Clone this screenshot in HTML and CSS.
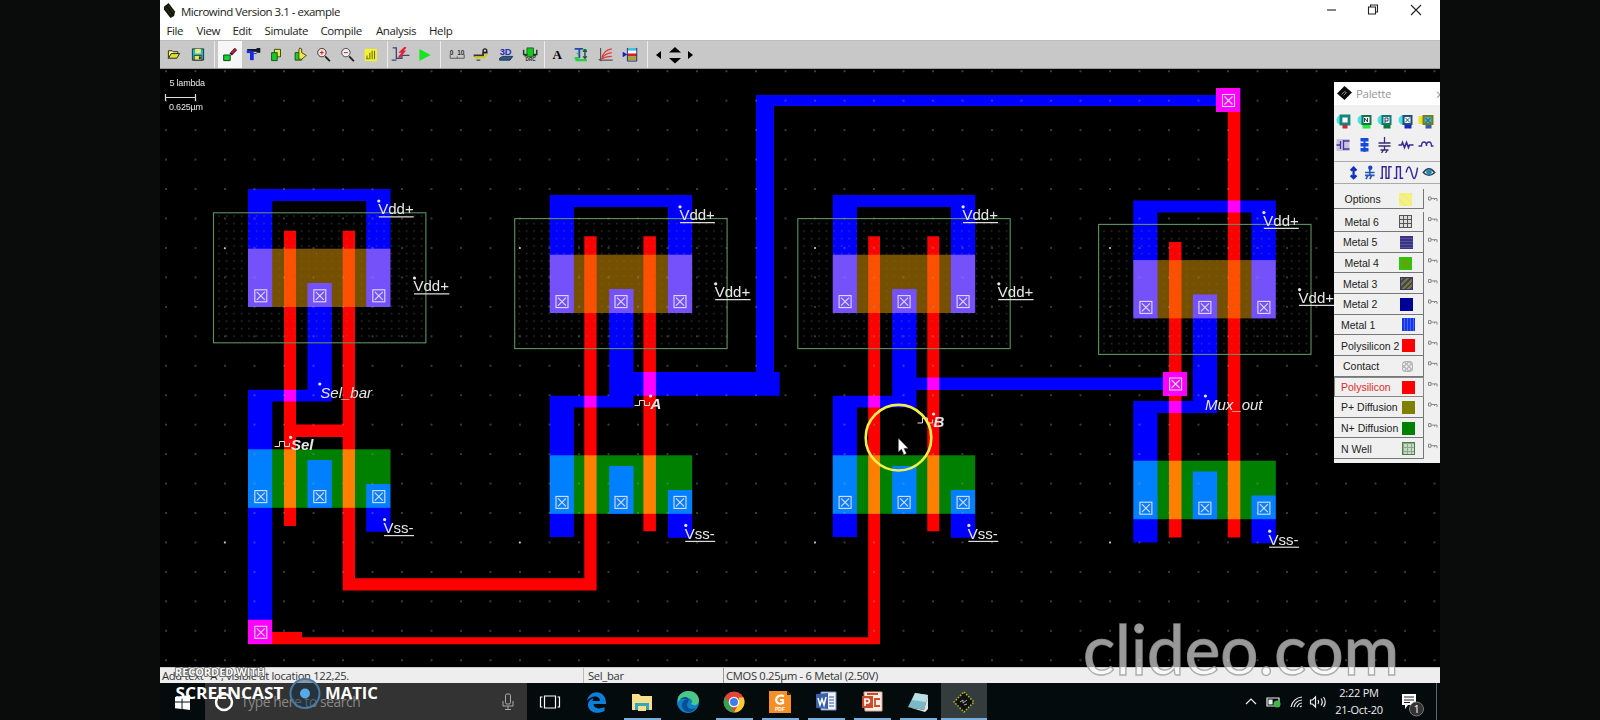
FILE: index.html
```html
<!DOCTYPE html>
<html lang="en">
<head>
<meta charset="utf-8">
<title>Microwind Version 3.1 - example</title>
<link rel="stylesheet" href="styles.css">
</head>
<body>
<div class="desktop">
  <header class="titlebar">
    <svg class="app-icon" viewBox="0 0 14 16"><path d="M1 4L6 0l7 9-1 5-4 2-7-9z" fill="#15180c"/><path d="M3 5l6 8M6 3l6 8" stroke="#55601f" stroke-dasharray="1 1.5"/></svg>
    <span class="title">Microwind Version 3.1 - example</span>
    <svg class="winctl" viewBox="0 0 110 20" fill="none" stroke="#222" stroke-width="1.1"><path d="M7 10h9"/><path d="M48.500 7h7v7h-7zM50.500 7V5h7v7h-2"/><path d="M91 5l10 10M101 5l-10 10"/></svg>
  </header>
  <nav class="menubar">
    <span class="m-file">File</span><span class="m-view">View</span><span class="m-edit">Edit</span><span class="m-sim">Simulate</span><span class="m-comp">Compile</span><span class="m-ana">Analysis</span><span class="m-help">Help</span>
  </nav>
  <div class="toolbar">
    <div class="tools files">
      <svg viewBox="0 0 16 16"><path d="M2 12V4h4l1 1h5v2H6z" fill="#ffff62" stroke="#222"/><path d="M2 12l3-5h9l-3 5z" fill="#dede35" stroke="#222"/></svg>
      <svg viewBox="0 0 16 16"><path d="M2 2h12v12H2z" fill="#22b8c4" stroke="#15323a"/><path d="M5 2h6v5H5z" fill="#f4ea72"/><path d="M4 9h8v5H4z" fill="#e6e65a" stroke="#222" stroke-width=".8"/><path d="M9 10h2v3H9z" fill="#225"/></svg>
    </div>
    <div class="tools edit">
      <svg class="pressed" viewBox="0 0 16 16"><path d="M1.500 8.500h7v6h-7z" fill="#10d42c" stroke="#113b15"/><path d="M9 8l5.500-6" stroke="#34141b" stroke-width="3.500"/><path d="M10 6.500l4-4.500" stroke="#c8213b" stroke-width="2"/></svg>
      <svg viewBox="0 0 16 16"><path d="M1 2h11v3H1zM11 1h4v5h-4z" fill="#11182a"/><path d="M4 5h4v9H4z" fill="#1728e6"/><path d="M1 4h4v2H1zM8 7h3" fill="#1728e6" stroke="#1728e6"/></svg>
      <svg viewBox="0 0 16 16"><path d="M5.500 2.500h6.500v8H5.500z" fill="#eee84b" stroke="#274c12"/><path d="M2.500 6h6v8.500h-6z" fill="#18c92a" stroke="#174e1a"/></svg>
      <svg viewBox="0 0 16 16"><path d="M2 6h7v8H2z" fill="#20cb2a" stroke="#154d17"/><path d="M7 1l2 1v4l5 3-5 4H6V3z" fill="#eee84b" stroke="#454514"/></svg>
      <svg viewBox="0 0 16 16"><circle cx="6" cy="6" r="4.500" fill="#f5ddd8" stroke="#333"/><path d="M4 6h4M6 4v4" stroke="#d01818"/><path d="M9.500 10l5 5" stroke="#222" stroke-width="2"/></svg>
      <svg viewBox="0 0 16 16"><circle cx="6" cy="6" r="4.500" fill="#eee" stroke="#444"/><path d="M4 6h4" stroke="#b51e1e"/><path d="M9.500 10l5 5" stroke="#222" stroke-width="2"/></svg>
      <svg viewBox="0 0 16 16"><path d="M1.500 2h13v13h-13z" fill="#f4f42b"/><path d="M4 9v4M7 6v7M9.500 4v9M12 4v9M3 12.500h3" stroke="#717123" stroke-width="1.200"/></svg>
    </div>
    <div class="tools run">
      <svg viewBox="0 0 20 16"><path d="M1 1h4v12M0 14h5M5 12h6V9h8" fill="none" stroke="#3b4774" stroke-width="1.400"/><path d="M15 0l-5 5h3l-5 6" fill="none" stroke="#e42233" stroke-width="2.300"/></svg>
      <svg viewBox="0 0 16 16"><path d="M2 2l12 6.500L2 15z" fill="#16e522"/></svg>
    </div>
    <div class="tools views">
      <svg viewBox="0 0 18 16"><path d="M1.500 8v4h15V8M9 10v2" fill="none" stroke="#555"/><text class="ruler" x="1" y="8">0</text><text class="ruler" x="9" y="8">10</text></svg>
      <svg viewBox="0 0 16 16"><path d="M0 9h10V6h5" stroke="#353535" stroke-width="2" fill="none"/><path d="M1 11h10l3-3" stroke="#d2c927" stroke-width="2.500" fill="none"/><circle cx="12" cy="4" r="2" fill="none" stroke="#222" stroke-width="1.400"/><path d="M3 14h4" stroke="#222"/></svg>
      <svg viewBox="0 0 16 16"><text class="three-d" x="1" y="9">3D</text><path d="M1 12l3-2h11l-3 4H1z" fill="#31587e" stroke="#183354"/></svg>
      <svg viewBox="0 0 16 16"><path d="M4.500 1h7v9h-7z" fill="#14c81e" stroke="#176b1e"/><path d="M1 3v5h3M15 3v5h-3M2 10l3-2M14 10l-3-2" stroke="#1b3e24" stroke-width="1.600" fill="none"/><text class="drc" x="3" y="15">DRC</text></svg>
    </div>
    <div class="tools extra">
      <svg viewBox="0 0 16 16"><text class="letter" x="3" y="13">A</text></svg>
      <svg viewBox="0 0 16 16"><path d="M1 2h9M6 2v10" stroke="#2448b6" stroke-width="2"/><path d="M2 14h12M1 12h4" stroke="#22d434" stroke-width="2.500"/><path d="M9 3h5M3 7h2" stroke="#22d434" stroke-width="1.500"/><path d="M12 3v9M10 5l2-2 2 2M10 10l2 2 2-2" stroke="#204c49" stroke-width="1.500" fill="none"/></svg>
      <svg viewBox="0 0 16 16"><path d="M2 1v13h13M0 13l3 2" fill="none" stroke="#555" stroke-width="1.200"/><path d="M3 13Q5 3 14 2M3 13Q6 7 14 6M3 13Q7 10 14 10" fill="none" stroke="#e33a3a" stroke-width="1.200"/></svg>
      <svg viewBox="0 0 16 16"><path d="M5 1h10v3H5z" fill="#45bde3"/><path d="M5 4h10v3H5z" fill="#fff"/><path d="M5 7h10v3H5z" fill="#d51c34"/><path d="M5 10h10v4H5z" fill="#a5a72d"/><path d="M5 1v14h10V1" stroke="#222b67" fill="none"/><path d="M0 5l5 3-5 3z" fill="#161ec0"/></svg>
    </div>
    <div class="arrows"><svg viewBox="0 0 42 20"><path d="M7 6v8l-5-4zM21 2l6 5.500H15zM21 18.500l6-5.500H15zM34 6v8l5-4z"/></svg></div>
  </div>

  <svg class="layout" viewBox="160 69 1280 598">
    <defs>
      <pattern id="grid" x="151.250" y="56.500" width="29.500" height="29.450" patternUnits="userSpaceOnUse"><rect class="gdot" x="14" y="14" width="1.500" height="1.500"/></pattern>
      <pattern id="welldots" x="215.500" y="212.500" width="7.500" height="7.500" patternUnits="userSpaceOnUse"><rect class="wdot" x="3" y="3" width="1.200" height="1.200"/></pattern>
      <g id="contact" class="contact"><rect x="-6" y="-6" width="12" height="12"/><path d="M-4-4L4 4M4-4L-4 4"/></g>
      <g id="trio"><use href="#contact" x="260.800"/><use href="#contact" x="319.800"/><use href="#contact" x="378.800"/></g>
      <!-- one two-finger inverter cell: supply rail, diffusions and output strap -->
      <g id="cell">
        <path class="metal" d="M248 307V189h142.500v118h-24.300V201h-94v106zM307.500 283h24.300v118.500h-59.600V508H248V389.700h59.500zM307.500 460h24.300v48h-24.300zM366.200 484h24.300v47.800h-24.300z"/>
        <rect class="pdiff" x="248" y="248.700" width="142.500" height="58.300"/>
        <rect class="ndiff" x="248" y="449.300" width="142.500" height="58.500"/>
      </g>
      <g id="celltext">
        <rect class="well" x="213.500" y="212.800" width="212.400" height="130"/>
        <use href="#trio" y="295.800"/><use href="#trio" y="496.600"/>
        <text x="378.200" y="214.200">Vdd+</text><path class="line" d="M378.700 216.800h35"/><circle cx="378.800" cy="201" r="1.600"/>
        <text x="413.500" y="291.200">Vdd+</text><path class="line" d="M414 293.800h35.300"/><circle cx="414.500" cy="278" r="1.600"/>
        <text x="383.500" y="533">Vss-</text><path class="line" d="M384 535.600h30"/><circle cx="384.600" cy="519.600" r="1.600"/>
      </g>
      <path id="pulse" class="pulse" d="M0 5.500h5V.5h5v5h5V2"/>
    </defs>
    <rect class="bg" x="160" y="69" width="1280" height="598"/>
    <use href="#cell"/>
    <use href="#cell" x="301.700" y="6"/>
    <use href="#cell" x="584.700" y="6"/>
    <use href="#cell" x="885.300" y="11.400"/>
    <path class="metal" d="M248 508h24.200v136H248zM549.700 513.500h24.200v23.500h-24.200zM832.700 513.500h24.200v23.500h-24.200zM1133.300 519h24.200v23.500h-24.200z"/>
    <path class="metal" d="M632 372h124V95h484v11H774v266h5.700v23.700H632zM915 377.500h272V390H915zM1163 372h24v24h-24zM1216 88h24.300v24H1216z"/>
    <path class="poly" d="M284 230.700h12v193.700h46.700V230.700H355v347.600h229.300V236.300h12.300v354.200H342.700V437H296v89h-12zM643.400 236.300h12.500v295h-12.500zM927.300 236.300h12v295h-12zM868.200 236.300h11.800v408H248v-24.600h24.200V632H302v5.300h566.200zM1169 242h12.500v130h5.500v24h-5.500v141.500H1169V396h-6v-24h6zM1216 88h24.300v449.500h-12.500V112H1216z"/>
    <g class="grid"><rect x="160" y="69" width="1280" height="598" fill="url(#grid)"/></g>
    <g fill="url(#welldots)"><rect x="215.500" y="214.500" width="209" height="126"/><rect x="516.500" y="220.500" width="209" height="126"/><rect x="800" y="220.500" width="209" height="126"/><rect x="1101" y="226.500" width="209" height="126"/></g>
    <g class="marks"><circle cx="224.800" cy="248.200" r="1"/><circle cx="519.800" cy="248" r="1"/><circle cx="815" cy="248" r="1"/><circle cx="1110" cy="248" r="1"/><circle cx="224.800" cy="542.500" r="1"/><circle cx="519.800" cy="542.500" r="1"/><circle cx="815" cy="542.500" r="1"/><circle cx="1110" cy="542.500" r="1"/></g>
    <g class="labels">
      <use href="#celltext"/>
      <use href="#celltext" x="301.200" y="5.800"/>
      <use href="#celltext" x="584.300" y="5.800"/>
      <use href="#celltext" x="885.100" y="11.600"/>
      <use href="#contact" x="260.800" y="632.300"/><use href="#contact" x="1175.600" y="384"/><use href="#contact" x="1228.500" y="100.500"/>
      <text class="net" x="320.300" y="398">Sel_bar</text><circle cx="319.800" cy="384" r="1.600"/>
      <text class="net" x="1205" y="410.400">Mux_out</text><circle cx="1205.400" cy="396" r="1.600"/>
      <text class="sig" x="291" y="450.400">Sel</text><circle cx="290.600" cy="437.300" r="1.600"/><use href="#pulse" x="274.500" y="441"/>
      <text class="sig" x="650.500" y="409.200">A</text><circle cx="650.600" cy="396" r="1.600"/><use href="#pulse" x="634.500" y="400"/>
      <text class="sig" x="933.500" y="427">B</text><circle cx="933.600" cy="414" r="1.600"/><use href="#pulse" x="917.500" y="417.500"/>
      <text class="scale" x="169.500" y="86" textLength="35.500">5 lambda</text><text class="scale" x="169" y="109.700" textLength="34">0.625µm</text><path class="line" d="M165.500 94v7M195.500 94v7M165.500 97.500h30"/>
    </g>
    <circle class="ring" cx="898.500" cy="437.700" r="32.800"/>
    <path class="cursor" d="M898.500 438.500v13.300l3-2.700 2.500 5.500 2.300-1-2.500-5.300h4.200z"/>
  </svg>

  <footer class="status"><span class="s-main">Add text "A", visible at location 122,25.</span><span class="s-net">Sel_bar</span><span class="s-tech">CMOS 0.25µm - 6 Metal (2.50V)</span></footer>

  <div class="taskbar">
    <div class="start"><svg viewBox="0 0 16 16"><path d="M0 2l7-1v6H0zM8 1l8-1v7H8zM0 8h7v7l-7-1zM8 8h8v8l-8-1z" fill="#fff"/></svg></div>
    <div class="search"><svg class="cortana" viewBox="0 0 20 20"><circle cx="10" cy="10" r="8" fill="none" stroke="#fff" stroke-width="2.500"/></svg><span>Type here to search</span><svg class="mic" viewBox="0 0 12 18"><rect x="3.500" y="1" width="5" height="10" rx="1.500"/><path d="M1 8v5h10V8M6 13v3M3 16.500h6"/></svg></div>
    <div class="apps">
      <div><svg viewBox="0 0 22 22"><path d="M5.500 5h11v12h-11zM3.500 6h-2v10h2M18.500 6h2v10h-2" fill="none" stroke="#fff" stroke-width="1.200"/></svg></div>
      <div><svg viewBox="0 0 22 22"><path d="M2 10C4-2 21-2 21 12v1H8.500c.5 5 7 5.500 11 3v4C12 24 3 21 3 14c0-4 3-6 6-7-1 1-1.500 2-1.500 3H15C15 4 6 4 2 10z" fill="#0b7fdc"/></svg></div>
      <div class="open"><svg viewBox="0 0 22 22"><path d="M1 3h7l2 2h11v14H1z" fill="#f6e08b"/><path d="M4 12h14v7H4z" fill="#38a5be"/><path d="M7 15h8v5H7z" fill="#f6e08b"/></svg></div>
      <div><svg viewBox="0 0 22 22"><circle cx="11" cy="11" r="11" fill="#0d7fc4"/><path d="M1 7C5-3 21-2 22 9c0 6-6 6-8 4 3-3 0-6-4-6-4-1-7 1-9 4z" fill="#4bc886"/><path d="M3 8c8-5 10 1 8 3-3 5 2 9 8 6-5 7-14 4-14-3 0-3 2-5 5-6z" fill="#0d4e92"/></svg></div>
      <div class="open"><svg viewBox="0 0 22 22"><circle cx="11" cy="11" r="10.500" fill="#e34538"/><path d="M2 6l6 9 3 6.500A10.500 10.500 0 0 1 2 6z" fill="#31a451"/><path d="M11 21.500L16 12V6.500h4.500A10.500 10.500 0 0 1 11 21.500z" fill="#f8cb35"/><circle cx="11" cy="11" r="5.300" fill="#fff"/><circle cx="11" cy="11" r="4" fill="#3f7de8"/></svg></div>
      <div class="open"><svg viewBox="0 0 22 22"><path d="M0 0h18l4 4v18H0z" fill="#f49026"/><path d="M18 0v4h4" fill="#4d240d"/><path d="M15 5Q8 3 7 9q1 5 7 3V9h-3" fill="none" stroke="#fff" stroke-width="2.200"/><text class="pdf" x="6" y="20">PDF</text></svg></div>
      <div class="open"><svg viewBox="0 0 22 22"><path d="M6 1h15v18H6z" fill="#f0f3fb" stroke="#7891ca"/><path d="M1 3l12-1v16L1 17z" fill="#3b60aa"/><path d="M3 7l2 7 2-6 2 6 2-8" fill="none" stroke="#fff" stroke-width="1.500"/><path d="M14 6h5M14 9h5M14 12h5M14 15h5" stroke="#3457a0"/></svg></div>
      <div class="open"><svg viewBox="0 0 22 22"><path d="M3 1h18v19H4z" fill="#f8eee8" stroke="#dfa590"/><path d="M1 5h11v12H1z" fill="#cf4b28"/><path d="M4 15V8h3q3 2 0 4H4" fill="none" stroke="#fff" stroke-width="1.700"/><path d="M19 8h-5v7h5M6 3h11" fill="none" stroke="#cf4b28" stroke-width="1.800"/></svg></div>
      <div class="open"><svg viewBox="0 0 22 22"><path d="M8 2l13 2-4 15-16-3z" fill="#7cb9c6"/><path d="M8 2l13 2-2 7-14-2z" fill="#b8dfe4"/><path d="M1 16l16 3 4-15v14l-3 3z" fill="#dde5e5"/></svg></div>
      <div class="open active"><svg viewBox="0 0 22 22"><path d="M11 1l10 10-10 10L1 11z" fill="#111" stroke="#b3bd29" stroke-width="1.500" stroke-dasharray="1.500 1.500"/><path d="M7 11l3-2v3l4-3M11 14l3-1" stroke="#aaa" fill="none"/></svg></div>
    </div>
    <svg class="tray" viewBox="0 0 90 26" fill="none" stroke="#eee" stroke-width="1.200"><path d="M4 15l5-5 5 5"/><path d="M25 9h12v8H25z"/><path d="M27 11h3v4h-3z" fill="#eee"/><circle cx="35" cy="15" r="3.500" fill="#43b649" stroke="none"/><path d="M49 18a12 12 0 0 1 11-10M52 18a9 9 0 0 1 8-7M55 18a6 6 0 0 1 5-4M58 18a3 3 0 0 1 2-1"/><path d="M68.500 11h2l3-3v10l-3-3h-2zM76 11q1.500 2 0 4M79 9.500q2.500 3.500 0 7M81.500 8q3.500 5 0 10"/></svg>
    <div class="clock"><span>2:22 PM</span><span>21-Oct-20</span></div>
    <svg class="notify" viewBox="0 0 26 26"><path d="M2 2h14v11H8l-3 4v-4H2z" fill="#fff"/><path d="M4 5h10M4 8h10M4 10.500h6" stroke="#222"/><circle cx="16.500" cy="17" r="7" fill="#333" stroke="#777"/><text class="badge" x="13.500" y="21">1</text></svg>
    <div class="peek"></div>
  </div>

  <aside class="palette">
    <div class="p-title"><svg viewBox="0 0 16 16"><path d="M8 0l8 7-8 8-8-7z" fill="#080808"/><path d="M5 9l3-3 2 1-3 3" stroke="#999" fill="none"/></svg><span>Palette</span><b>×</b></div>
    <div class="p-icons">
      <svg viewBox="0 0 15 16"><circle cx="5" cy="7" r="5" fill="#4de0e0"/><path d="M4.500 3h8v8h-8z" fill="#fff" stroke="#14857c" stroke-width="2.800"/><path d="M6 12h5v3.500H6z" fill="#d22432"/></svg>
      <svg viewBox="0 0 15 16"><circle cx="5" cy="7" r="5" fill="#4de0e0"/><path d="M5 3h8v8H5z" fill="#fff" stroke="#16714a" stroke-width="2"/><path d="M7 9V5l3 4V5" fill="none" stroke="#245"/><path d="M5 12h8v3.500H5z" fill="#28e83b"/></svg>
      <svg viewBox="0 0 15 16"><circle cx="5" cy="7" r="5" fill="#4de0e0"/><path d="M5 3h8v8H5z" fill="#fff" stroke="#117676" stroke-width="2"/><path d="M7.500 10V5h3v3h-3" fill="none" stroke="#245"/><path d="M6 12h7v3.500H6z" fill="#087a36"/></svg>
      <svg viewBox="0 0 15 16"><circle cx="5" cy="7" r="5" fill="#4de0e0"/><path d="M5 3h8v8H5z" fill="#fff" stroke="#1b5277" stroke-width="2"/><path d="M6.500 4.500l5 5M11.500 4.500l-5 5" stroke="#257"/><path d="M6 12h7v3.500H6z" fill="#1626c8"/></svg>
      <svg viewBox="0 0 15 16"><path d="M0 3h9v8H0z" fill="#f2df2d"/><path d="M5 3h9v8H5z" fill="#44adc1" stroke="#70801e" stroke-width="2"/><path d="M7 5l5 5M12 5l-5 5" stroke="#257"/><path d="M7 12h6v3.500H7z" fill="#365ea7"/></svg>
      <svg viewBox="0 0 15 16"><path d="M0 2h13v12H0z" fill="#c8c4e0"/><path d="M0 8h4M4 4v8M7 3v10M7 4h6M7 12h6" fill="none" stroke="#46349a" stroke-width="1.300"/></svg>
      <svg viewBox="0 0 15 16"><path d="M3 1h8v3.500H3zM3 6h8v3.500H3zM3 11h8v3.500H3zM6 1h2v14H6z" fill="#174bdc"/></svg>
      <svg viewBox="0 0 15 16"><path d="M7 0v6M1 6h12M1 9h12M7 9v4M3 13h8M4 16l2-3M8 16l2-3" fill="none" stroke="#342b73" stroke-width="1.300"/></svg>
      <svg viewBox="0 0 15 16"><path d="M0 8h3l1-2.500 2 5 2-5 2 5 1-2.500h4" fill="none" stroke="#3a2c97" stroke-width="1.600"/></svg>
      <svg viewBox="0 0 15 16"><path d="M0 9h3q0-4 2.500-4T8 9q0-4 2.500-4T13 9h2" fill="none" stroke="#3a2c97" stroke-width="1.400"/></svg>
    </div>
    <svg class="p-sources" viewBox="0 0 106 22"><path d="M18 5v12M15 9l3-3 3 3M15 14l3 3 3-3" stroke="#1230bf" stroke-width="2.400" fill="none"/><path d="M35 6v8M30 11h10M30 14h10M31 18l2-4M35 18l2-4" stroke="#2457b3" stroke-width="1.700" fill="none"/><circle cx="35.500" cy="6" r="2.300" fill="#1248c7"/><path d="M46 17h2V5h4v12h3V5h3M60 17h3V5h4v12h3M73 11q3-12 6 1t6-6" fill="none" stroke="#32269b" stroke-width="1.500"/><path d="M91 11q6-8 12 0-6 6-12 0z" fill="#fff" stroke="#263b56" stroke-width="1.500"/><circle cx="97" cy="10.500" r="3" fill="#2687ad"/></svg>
    <div class="layers">
      <div class="row first"><span class="t2">Options</span><i class="opt"></i></div>
      <div class="row"><span class="t2">Metal 6</span><i class="m6"></i></div>
      <div class="row"><span class="t1">Metal 5</span><i class="m5"></i></div>
      <div class="row"><span class="t2">Metal 4</span><i class="m4"></i></div>
      <div class="row"><span class="t1">Metal 3</span><i class="m3"></i></div>
      <div class="row"><span class="t1">Metal 2</span><i class="m2"></i></div>
      <div class="row"><span>Metal 1</span><i class="m1"></i></div>
      <div class="row"><span>Polysilicon 2</span><i class="red"></i></div>
      <div class="row"><span class="t1">Contact</span><i class="con"></i></div>
      <div class="row selected"><span>Polysilicon</span><i class="red"></i></div>
      <div class="row"><span>P+ Diffusion</span><i class="pd"></i></div>
      <div class="row"><span>N+ Diffusion</span><i class="nd"></i></div>
      <div class="row"><span>N Well</span><i class="nw"></i></div>
    </div>
    <svg class="keys" viewBox="0 0 12 274"><defs><path id="key" d="M1.500 2.500h2.500v3H1.500zM4 4h6v2.500M7.500 4v1.500"/></defs><g fill="none" stroke="#888" stroke-width="1"><use href="#key" y="5.500"/><use href="#key" y="26.100"/><use href="#key" y="46.700"/><use href="#key" y="67.300"/><use href="#key" y="87.900"/><use href="#key" y="108.500"/><use href="#key" y="129.100"/><use href="#key" y="149.700"/><use href="#key" y="170.300"/><use href="#key" y="190.900"/><use href="#key" y="211.500"/><use href="#key" y="232.100"/><use href="#key" y="252.700"/></g></svg>
  </aside>

  <svg class="watermarks" viewBox="160 610 1280 110">
    <text class="clideo" x="1083" y="675" textLength="316" lengthAdjust="spacingAndGlyphs">clideo.com</text>
    <text class="rec" x="175" y="676" textLength="90" lengthAdjust="spacingAndGlyphs">RECORDED WITH</text>
    <circle cx="305" cy="693.500" r="14.500" fill="#17324a" fill-opacity=".45" stroke="#477ba5" stroke-width="2"/><circle cx="305" cy="693.500" r="5" fill="#58a9e4"/>
    <text class="som" x="175.500" y="699" textLength="108" lengthAdjust="spacingAndGlyphs">SCREENCAST</text>
    <text class="som" x="325" y="699" textLength="53" lengthAdjust="spacingAndGlyphs">MATIC</text>
  </svg>
</div>
</body>
</html>
```
FILE: styles.css
```css
* { box-sizing: border-box; }
body { margin: 0; background: #090c0b; overflow: hidden; font-family: "Open Sans", "Noto Sans", sans-serif; }
.desktop { position: relative; width: 1280px; height: 720px; margin: 0 auto; display: grid; grid-template-rows: 21px 19px 29px 598px 16px 37px; background: #fff; overflow: hidden; }
svg { display: block; }

.titlebar { display: flex; align-items: center; padding-left: 3px; background: #fff; }
.app-icon { width: 13px; height: 15px; margin-right: 5px; }
.title { font-size: 11.5px; letter-spacing: -.5px; color: #222; padding-top: 1px; white-space: nowrap; }
.winctl { width: 110px; height: 20px; margin-left: auto; margin-right: 10px; margin-top: -1px; }
.menubar { display: flex; padding-left: 6.5px; font-size: 11.5px; line-height: 19px; letter-spacing: -.4px; color: #222; }
.menubar span { white-space: nowrap; }
.m-file { width: 30px; } .m-view { width: 36px; } .m-edit { width: 32px; } .m-sim { width: 56px; } .m-comp { width: 55.5px; } .m-ana { width: 53px; }

.toolbar { display: flex; align-items: center; background: #c8c8c8; border-top: 1px solid #bdbdbd; border-bottom: 1px solid #999; padding-left: 2px; }
.tools { display: flex; height: 27px; align-items: center; border-right: 1px solid #ececec; }
.tools svg { width: 24px; height: 15px; flex: none; }
.files { width: 53px; }
.edit { width: 173px; padding-left: 3px; }
.edit svg { width: 23.5px; }
.edit .pressed { background: #f6f6f6; height: 27px; padding: 6px 0; }
.run { width: 53px; padding-left: 1px; }
.views { width: 104px; padding-left: 4px; }
.views svg, .extra svg { width: 24.4px; }
.extra { width: 103px; }
.arrows { padding-left: 6px; }
.arrows svg { width: 42px; height: 20px; }
.ruler { font: bold 7px "Liberation Sans", sans-serif; fill: #333; }
.three-d { font: bold 10px "Liberation Sans", sans-serif; fill: #1c2ab8; }
.drc { font: bold 5px "Liberation Sans", sans-serif; fill: #222; }
.letter { font: bold 14px "Liberation Serif", serif; fill: #000; }

.layout { width: 1280px; height: 598px; isolation: isolate; }
.bg { fill: #000; }
.metal { fill: #00f; mix-blend-mode: screen; }
.poly { fill: #f00; mix-blend-mode: screen; }
.pdiff { fill: #755000; mix-blend-mode: screen; }
.ndiff { fill: #008000; mix-blend-mode: screen; }
.gdot { fill: #999; opacity: .65; }
.wdot { fill: #5d7557; opacity: .7; }
.marks { fill: #ccc; }
.well { fill: none; stroke: #5f925f; stroke-width: 1.1; }
.contact { fill: none; stroke: #e0dcff; stroke-width: 1.1; }
.labels { fill: #e8e8e8; font: 15px "Liberation Sans", sans-serif; }
.line { fill: none; stroke: #ddd; stroke-width: 1.2; }
.net { font-style: italic; }
.sig { font-style: italic; font-weight: bold; }
.pulse { fill: none; stroke: #eedcc8; stroke-width: 1; }
.scale { font-size: 9px; }
.ring { fill: none; stroke: #f1f04a; stroke-width: 2.6; }
.cursor { fill: #fff; stroke: #777; stroke-width: .4; }

.status { display: flex; background: #eee; font-size: 11.2px; line-height: 15px; letter-spacing: -.3px; color: #333; border-top: 1px solid #ccc; white-space: nowrap; }
.s-main { width: 424px; padding-left: 2px; border-right: 1px solid #bbb; }
.s-net { width: 140px; padding-left: 4px; border-right: 1px solid #999; }
.s-tech { padding-left: 2px; }

.taskbar { display: flex; background: #030b0d; color: #eee; }
.start { width: 45px; padding: 12px 0 0 15px; }
.start svg { width: 15px; height: 15px; }
.search { width: 322px; background: #333; display: flex; align-items: center; color: #888; font-size: 13.8px; letter-spacing: -.4px; padding: 0 0 0 9px; white-space: nowrap; }
.cortana { width: 20px; height: 20px; margin-right: 7px; }
.mic { width: 12px; height: 18px; margin-left: auto; margin-right: 13px; fill: none; stroke: #aaa; }
.apps { display: flex; }
.apps div { width: 46px; height: 37px; display: flex; justify-content: center; padding-top: 7.5px; }
.apps svg { width: 22px; height: 22px; }
.apps .open { background: linear-gradient(#78aede, #78aede) 50% 100% / 37px 2px no-repeat; }
.apps .active { background: linear-gradient(#78aede, #78aede) 50% 100% / 46px 2px no-repeat #353c3d; }
.pdf { font: bold 5px "Liberation Sans", sans-serif; fill: #fff; }
.tray { width: 90px; height: 26px; margin: 6px 0 0 255px; }
.clock { width: 60px; margin-left: -3px; display: flex; flex-direction: column; align-items: center; font-size: 11px; line-height: 17px; letter-spacing: -.25px; padding-top: 1px; }
.notify { width: 26px; height: 26px; margin: 9px 0 0 11px; }
.badge { font: 11px "Open Sans", sans-serif; fill: #fff; }
.peek { margin-left: auto; width: 4px; border-left: 1px solid #666; }

.palette { position: absolute; left: 1174px; top: 82px; width: 106px; height: 381px; background: #f0f0f0; overflow: hidden; }
.p-title { display: flex; align-items: center; height: 23px; background: #fff; padding-left: 3px; font-size: 11.5px; letter-spacing: -.3px; color: #999; }
.p-title svg { width: 15px; height: 15px; margin-right: 4px; }
.p-title b { margin-left: auto; margin-right: -4px; font-weight: 400; font-size: 15px; }
.p-icons { display: grid; grid-template-columns: repeat(5, 20.5px); grid-template-rows: 24px 24px; padding: 4px 0 0 0; height: 56px; align-items: center; justify-items: center; }
.p-icons svg { width: 16px; height: 16px; }
.p-sources { width: 106px; height: 23px; border-top: 1px solid #aaa; border-bottom: 1px solid #aaa; }
.layers { width: 90px; padding-top: 5px; }
.row { height: 20.64px; display: flex; align-items: center; border-right: 1.5px solid #777; border-bottom: 1.5px solid #777; padding: 1px 0 0 7px; font: 10.5px "Liberation Sans", sans-serif; color: #222; white-space: nowrap; }
.row.first { height: 20px; margin-bottom: 2.5px; }
.row span { width: 60.5px; }
.row .t1 { width: 59px; padding-left: 2px; }
.row .t2 { width: 57.5px; padding-left: 3.5px; }
.row i { width: 13px; height: 13px; flex: none; }
.row.selected { color: #e02a2a; border: 1.5px solid #888; padding-left: 6px; }
.opt { background: repeating-linear-gradient(45deg, #f4f27b 0 4px, #ece894 4px 6px); }
.m6 { background: repeating-linear-gradient(90deg, #555 0 1px, transparent 1px 4px), repeating-linear-gradient(#555 0 1px, #ddd 1px 4px); }
.m5 { background: repeating-linear-gradient(#3a3484 0 2px, #5a529e 2px 3px); }
.m4 { background: #58a90a; border: 2px solid #2fc20e; }
.m3 { background: repeating-linear-gradient(135deg, #777538 0 2px, #45435a 2px 4px); border: 1px solid #39366e; }
.m2 { background: #000096; }
.m1 { background: repeating-linear-gradient(90deg, #1834e8 0 2px, #4467ff 2px 3px); }
.red { background: #f00; }
.row .con { width: 11px; height: 11px; margin-left: 1.5px; border: 1px solid #b5b5b5; border-radius: 3px; background: repeating-linear-gradient(45deg, #bbb 0 1px, transparent 1px 3.5px), repeating-linear-gradient(135deg, #bbb 0 1px, #e8e8e8 1px 3.5px); }
.pd { background: #808000; }
.nd { background: #008000; }
.nw { border: 1px solid #47804f; background: repeating-linear-gradient(90deg, #8aaa8c 0 1px, transparent 1px 4px), repeating-linear-gradient(#8aaa8c 0 1px, #cbd8c8 1px 4px); }
.keys { position: absolute; left: 93px; top: 107px; width: 12px; height: 274px; }

.watermarks { position: absolute; left: 0; top: 610px; width: 1280px; height: 110px; pointer-events: none; }
.clideo { font: 400 70px Lato, sans-serif; fill: #fff; fill-opacity: .6; stroke: #999; stroke-width: 1.4; stroke-opacity: .8; }
.rec { font: bold 10.5px "Open Sans", sans-serif; fill: #fff; stroke: #555; stroke-width: 1.6; paint-order: stroke; }
.som { font: bold 16px "Open Sans", sans-serif; fill: #fff; }
```
